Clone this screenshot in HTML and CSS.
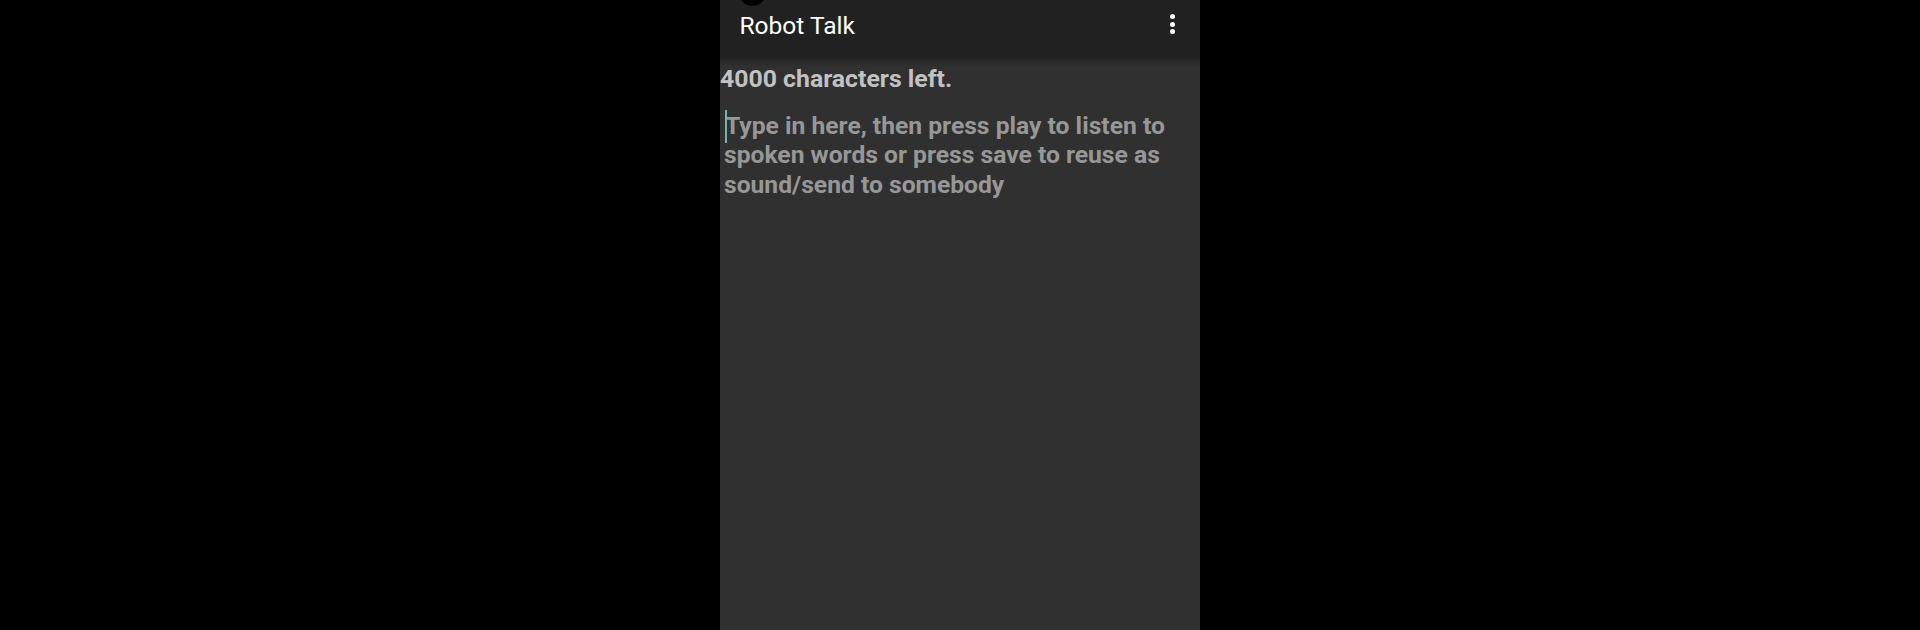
FILE: index.html
```html
<!DOCTYPE html>
<html lang="en">
<head>
<meta charset="utf-8">
<title>Robot Talk</title>
<link rel="stylesheet" href="styles.css">
</head>
<body>
<main class="phone">
  <header class="appbar">
    <span class="status-dot"></span>
    <h1 class="title">Robot Talk</h1>
    <button class="menu" aria-label="More options">
      <span class="dot"></span><span class="dot"></span><span class="dot"></span>
    </button>
  </header>
  <section class="content">
    <p class="counter">4000 characters left.</p>
    <div class="editor">
      <span class="caret"></span>
      <p class="placeholder">Type in here, then press play to listen to spoken words or press save to reuse as sound/send to somebody</p>
    </div>
  </section>
</main>
</body>
</html>
```
FILE: styles.css
```css
html, body {
  margin: 0;
  height: 100%;
  background: #000;
  overflow: hidden;
}
body {
  display: flex;
  justify-content: center;
  font-family: Roboto, "Liberation Sans", sans-serif;
}
.phone {
  width: 480px;
  height: 630px;
  display: flex;
  flex-direction: column;
  background: #303030;
}
.appbar {
  position: relative;
  flex: 0 0 58px;
  display: flex;
  align-items: flex-start;
  justify-content: space-between;
  padding: 10px 25px 0 19.5px;
  box-sizing: border-box;
  background: #212121;
}
.status-dot {
  position: absolute;
  left: 19px;
  top: -21px;
  width: 27px;
  height: 27px;
  border-radius: 50%;
  background: #000;
}
.title {
  margin: 0;
  font-size: 24.5px;
  line-height: 32px;
  font-weight: 400;
  color: #fff;
}
.menu {
  display: flex;
  flex-direction: column;
  gap: 2.7px;
  padding: 0;
  margin: 4px 0 0 0;
  border: 0;
  background: none;
}
.dot {
  width: 5px;
  height: 5px;
  border-radius: 50%;
  background: #fff;
}
.content {
  flex: 1;
  background: linear-gradient(#232323 0, #303030 8px);
}
.counter {
  margin: 7px 0 0 0;
  font-size: 24.8px;
  line-height: 28px;
  font-weight: 700;
  color: #c2c2c2;
}
.editor {
  position: relative;
  margin-top: 17.5px;
  padding: 0 24px 0 4px;
}
.caret {
  position: absolute;
  left: 5px;
  top: -1px;
  width: 2px;
  height: 33px;
  background: #6fb8ac;
}
.placeholder {
  margin: 0;
  font-size: 24.65px;
  line-height: 29.5px;
  font-weight: 700;
  text-indent: 1px;
  color: #979797;
}
```
